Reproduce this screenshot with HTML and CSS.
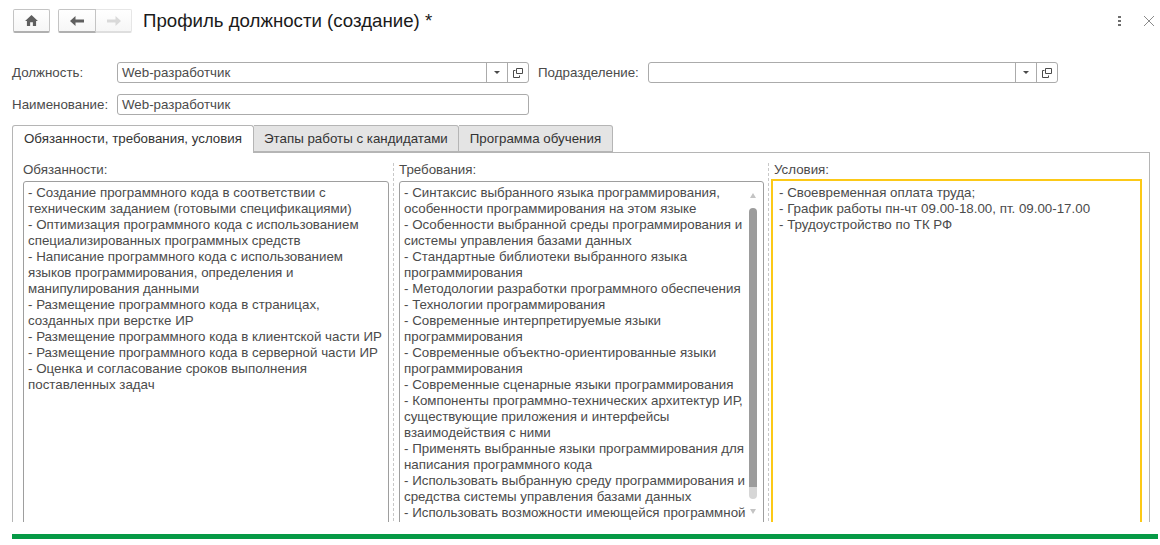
FILE: index.html
```html
<!DOCTYPE html>
<html lang="en">
<head>
  <meta charset="UTF-8">
  <title>Профиль должности</title>
  <link rel="stylesheet" href="styles.css">
</head>
<body>
  <div class="page">
    <div class="toolbar">
      <button class="navBtn homeBtn">
        <svg width="13" height="11" viewBox="0 0 14 12"><path d="M7 0 L14 6.5 L12 6.5 L12 12 L8.5 12 L8.5 8 L5.5 8 L5.5 12 L2 12 L2 6.5 L0 6.5 Z" fill="#5f5f5f"/></svg>
      </button>
      <div class="navGroup">
        <button class="navBtn backBtn">
          <svg width="14" height="10" viewBox="0 0 14 10"><path d="M0 5 L5.5 0 L5.5 3.5 L14 3.5 L14 6.5 L5.5 6.5 L5.5 10 Z" fill="#5f5f5f"/></svg>
        </button>
        <button class="navBtn forwardBtn">
          <svg width="14" height="10" viewBox="0 0 14 10"><path d="M14 5 L8.5 0 L8.5 3.5 L0 3.5 L0 6.5 L8.5 6.5 L8.5 10 Z" fill="#d9d9d9"/></svg>
        </button>
      </div>
      <h1 class="title">Профиль должности (создание) *</h1>
      <div class="windowBtns">
        <svg width="3" height="10" viewBox="0 0 3 10"><path d="M0 0h3v2H0zM0 4h3v2H0zM0 8h3v2H0z" fill="#6e6e6e"/></svg>
        <svg class="closeIcon" width="10" height="10" viewBox="0 0 10 10"><path d="M0 0 L10 10 M10 0 L0 10" stroke="#8a8a8a" stroke-width="1" fill="none"/></svg>
      </div>
    </div>

    <div class="formRow firstRow">
      <label class="fieldLabel">Должность:</label>
      <div class="field positionField">
        <span class="fieldValue">Web-разработчик</span>
        <span class="fieldBtn"><i class="caret"></i></span>
        <span class="fieldBtn">
          <svg width="10" height="10" viewBox="0 0 10 10"><path d="M3.5 .5h6v5h-6z M2.5 2.5h-2v7h6v-2" stroke="#4a4a4a" fill="none"/></svg>
        </span>
      </div>
      <label class="fieldLabel deptLabel">Подразделение:</label>
      <div class="field deptField">
        <span class="fieldValue"></span>
        <span class="fieldBtn"><i class="caret"></i></span>
        <span class="fieldBtn">
          <svg width="10" height="10" viewBox="0 0 10 10"><path d="M3.5 .5h6v5h-6z M2.5 2.5h-2v7h6v-2" stroke="#4a4a4a" fill="none"/></svg>
        </span>
      </div>
    </div>
    <div class="formRow secondRow">
      <label class="fieldLabel">Наименование:</label>
      <div class="field nameField"><span class="fieldValue">Web-разработчик</span></div>
    </div>

    <div class="tabs">
      <div class="tab activeTab">Обязанности, требования, условия</div>
      <div class="tab stagesTab">Этапы работы с кандидатами</div>
      <div class="tab">Программа обучения</div>
    </div>
    <div class="tabPanel">
      <div class="column dutiesCol">
        <div class="columnLabel">Обязанности:</div>
        <div class="textBox">- Создание программного кода в соответствии с
техническим заданием (готовыми спецификациями)
- Оптимизация программного кода с использованием
специализированных программных средств
- Написание программного кода с использованием
языков программирования, определения и
манипулирования данными
- Размещение программного кода в страницах,
созданных при верстке ИР
- Размещение программного кода в клиентской части ИР
- Размещение программного кода в серверной части ИР
- Оценка и согласование сроков выполнения
поставленных задач</div>
      </div>
      <div class="splitter"></div>
      <div class="column reqCol">
        <div class="columnLabel">Требования:</div>
        <div class="textBox scrollBox">- Синтаксис выбранного языка программирования,
особенности программирования на этом языке
- Особенности выбранной среды программирования и
системы управления базами данных
- Стандартные библиотеки выбранного языка
программирования
- Методологии разработки программного обеспечения
- Технологии программирования
- Современные интерпретируемые языки
программирования
- Современные объектно-ориентированные языки
программирования
- Современные сценарные языки программирования
- Компоненты программно-технических архитектур ИР,
существующие приложения и интерфейсы
взаимодействия с ними
- Применять выбранные языки программирования для
написания программного кода
- Использовать выбранную среду программирования и
средства системы управления базами данных
- Использовать возможности имеющейся программной
<div class="scrollbar">
            <i class="arrowUp"></i>
            <div class="scrollTrack"><div class="scrollThumb"></div></div>
            <i class="arrowDown"></i>
          </div></div>
      </div>
      <div class="splitter lastSplitter"></div>
      <div class="column condCol">
        <div class="columnLabel condLabel">Условия:</div>
        <div class="textBox focusBox">- Своевременная оплата труда;
- График работы пн-чт 09.00-18.00, пт. 09.00-17.00
- Трудоустройство по ТК РФ</div>
      </div>
    </div>
  </div>
  <div class="statusBar"></div>
</body>
</html>
```

FILE: styles.css
```css
body {
  margin: 0;
  background: #fff;
  font-family: "Liberation Sans", Arial, sans-serif;
  font-size: 13.33px;
  color: #4b4b4b;
}

/* everything above the green bar is cut off at 522 */
.page {
  height: 522px;
  overflow: hidden;
  padding: 0 10px 0 12px;
  box-sizing: border-box;
}

.toolbar {
  display: flex;
  align-items: center;
  height: 42px;
  padding-left: 1px;
}

.navBtn {
  height: 24px;
  padding: 0;
  display: flex;
  align-items: center;
  justify-content: center;
  background: linear-gradient(#fff, #f6f6f6);
  border: 1px solid #c4c4c4;
  border-bottom: 2px solid #b0b0b0;
}

.homeBtn {
  width: 37px;
  border-radius: 2px;
}

.navGroup {
  display: flex;
  margin-left: 8px;
}

.backBtn {
  width: 38px;
  border-radius: 2px 0 0 2px;
}

.forwardBtn {
  width: 36px;
  border: 1px solid #e6e6e6;
  border-left: 0;
  border-bottom: 2px solid #dedede;
  border-radius: 0 2px 2px 0;
}

.title {
  margin: 0 0 0 11px;
  font-size: 18.67px;
  font-weight: normal;
  color: #1a1a1a;
  flex: 1;
}

.windowBtns {
  display: flex;
  align-items: center;
  gap: 23px;
  margin-right: -4px;
}

.formRow {
  display: flex;
  align-items: center;
  height: 21px;
}

.firstRow {
  margin-top: 20px;
}

.secondRow {
  margin-top: 11px;
}

.fieldLabel {
  width: 105px;
  flex-shrink: 0;
}

.deptLabel {
  width: auto;
  margin: 0 9px 0 9px;
}

.field {
  display: flex;
  height: 21px;
  box-sizing: border-box;
  border: 1px solid #ababab;
  border-radius: 3px;
}

.positionField,
.nameField {
  width: 412px;
}

.deptField {
  width: 410px;
}

.fieldValue {
  flex: 1;
  padding-left: 4px;
  line-height: 19px;
}

.fieldBtn {
  width: 20px;
  display: flex;
  align-items: center;
  justify-content: center;
  border-left: 1px solid #ababab;
}

.caret {
  width: 0;
  height: 0;
  border-left: 3px solid transparent;
  border-right: 3px solid transparent;
  border-top: 3px solid #4a4a4a;
}

.tabs {
  display: flex;
  margin-top: 10px;
  height: 28px;
  position: relative;
  z-index: 1;
}

.tab {
  box-sizing: border-box;
  height: 27px;
  padding: 0 11px;
  line-height: 26px;
  background: #e4e4e4;
  border: 1px solid #b5b5b5;
  border-left: 0;
  border-radius: 0 3px 0 0;
  color: #333;
}

.activeTab {
  width: 242px;
  height: 28px;
  background: #fff;
  border-left: 1px solid #b5b5b5;
  border-bottom: 0;
  border-radius: 3px 3px 0 0;
  text-align: center;
  padding: 0;
  flex-shrink: 0;
}

.stagesTab {
  padding: 0 10px;
}

.tabPanel {
  display: flex;
  margin-top: -1px;
  height: 400px;
  box-sizing: border-box;
  border: 1px solid #b5b5b5;
  padding: 10px 7px 0 10px;
}

.column {
  display: flex;
  flex-direction: column;
}

.dutiesCol {
  width: 366px;
}

.reqCol {
  width: 365px;
}

.condCol {
  width: 371px;
}

.columnLabel {
  height: 18px;
  line-height: 13px;
}

.condLabel {
  padding-left: 3px;
}

.textBox {
  flex: 1;
  white-space: pre-wrap;
  line-height: 16px;
  padding: 3px 4px;
  border: 1px solid #9e9e9e;
  border-radius: 3px 3px 0 0;
  overflow: hidden;
  position: relative;
}

/* focused box sticks out 2px over its label row */
.focusBox {
  margin-top: -2px;
  border: 2px solid #fcc917;
  border-radius: 0;
  padding: 4px 6px 2px;
}

.splitter {
  width: 0;
  margin: 0 5px 0 4px;
  border-left: 1px dashed #c8c8c8;
}

.lastSplitter {
  margin: 0 2px 0 4px;
}

.scrollbar {
  position: absolute;
  top: 11px;
  right: 6px;
  width: 8px;
  height: 319px;
  display: flex;
  flex-direction: column;
  align-items: center;
}

.scrollTrack {
  width: 8px;
  margin: 10px 0;
}

.scrollThumb {
  height: 291px;
  border-radius: 4px;
  background: linear-gradient(#9c9c9c 279px, #d6d6d6 279px);
}

.arrowUp,
.arrowDown {
  width: 0;
  height: 0;
  border-left: 3px solid transparent;
  border-right: 3px solid transparent;
}

.arrowUp {
  border-bottom: 5px solid #c4c4c4;
}

.arrowDown {
  border-top: 5px solid #c4c4c4;
}

.statusBar {
  height: 5px;
  margin: 12px 2px 0 12px;
  background: #069a46;
}
```
